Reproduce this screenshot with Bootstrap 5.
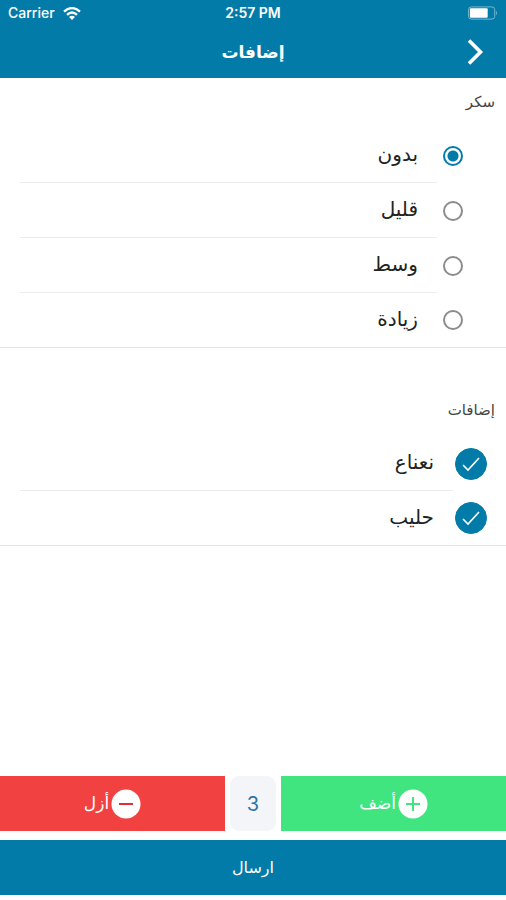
<!DOCTYPE html>
<html lang="ar" dir="rtl">
<head>
<meta charset="utf-8">
<meta name="viewport" content="width=device-width, initial-scale=1">
<title>إضافات</title>
<link href="https://cdn.jsdelivr.net/npm/bootstrap@5.3.0/dist/css/bootstrap.min.css" rel="stylesheet">
<style>
:root { --brand: #037ba9; }
body { font-family: "DejaVu Sans", sans-serif; color: #222; background: #fff; }
.bg-brand { background: var(--brand); }
.status-bar { height: 26px; font: 500 14px/26px Inter, sans-serif; }
.status-bar svg, .title-bar svg { display: block; }
.clock { font-weight: 600; }
.title-bar { height: 52px; }
.title-bar h1 { font-size: 17px; line-height: 52px; }
.back-btn { padding: 0 22px 0 0; }
.group-title { height: 50px; padding: 0 11px 2px; font-size: 15px; color: #444; }
.group-gap { height: 38px; }
.option { height: 55px; cursor: pointer; }
.option-text { margin-inline-end: 20px; padding: 0 19px 2px 0; font-size: 20px; border-bottom: 1px solid #ececec; }
.option-group .option:last-child { border-bottom: 1px solid #e4e4e4; }
.option-group .option:last-child .option-text { border-bottom: 0; }
.option .form-check-input { margin: 0; flex: none; box-shadow: none; background-color: #fff; }
.option .form-check-input[type=radio] { width: 20px; height: 20px; margin-inline: 43px 6px; border: 2px solid #8c8c8c; }
.option .form-check-input[type=radio]:checked { border-color: var(--brand); background-image: radial-gradient(circle, var(--brand) 5px, transparent 6px); }
.option .form-check-input[type=checkbox] { width: 32px; height: 32px; margin-inline: 19px 2px; border: 1px solid #aaa; border-radius: 50%; }
.option .form-check-input[type=checkbox]:checked { border-color: var(--brand); background-color: var(--brand); background-size: 32px;
  background-image: url("data:image/svg+xml,%3csvg xmlns='http://www.w3.org/2000/svg' viewBox='0 0 32 32'%3e%3cpath fill='none' stroke='%23fff' stroke-width='1.6' d='M8 17l5 5L24 10'/%3e%3c/svg%3e"); }
.action-btn { height: 55px; padding: 0; gap: 2px; border: 0; border-radius: 0; font-size: 17px; color: #fff; }
.action-btn:hover { color: #fff; }
.add-btn, .add-btn:hover { background: #40e57f; }
.remove-btn, .remove-btn:hover { background: #f24141; }
.count { width: 46px; margin: 0 5px; border-radius: 9px; background: #f4f5f9; color: #2e74a5; font: 20px Inter, sans-serif; }
.page-foot { padding-bottom: 5px; }
.send-btn, .send-btn:hover { margin-top: 9px; background: var(--brand); font-size: 16px; font-weight: 500; }
</style>
<script src="https://cdn.jsdelivr.net/npm/bootstrap@5.3.0/dist/js/bootstrap.bundle.min.js"></script>
</head>
<body>
<div class="d-flex flex-column min-vh-100">
  <header class="bg-brand text-white">
    <div class="status-bar row g-0 px-2" dir="ltr">
      <div class="col d-flex align-items-center gap-2">
        <span>Carrier</span>
        <svg width="18" height="13" viewBox="0 0 18 13" fill="none" stroke="#fff" stroke-width="2.4" aria-hidden="true"><path d="M1 4.6Q9-2.4 17 4.6M4 7.8q5-4.4 10 0"/><path d="M9 13L6 10q3-2.4 6 0z" fill="#fff" stroke="none"/></svg>
      </div>
      <div class="col-auto clock">2:57 PM</div>
      <div class="col d-flex align-items-center justify-content-end">
        <svg width="30" height="14" viewBox="0 0 32 14" aria-hidden="true"><rect x=".5" y=".5" width="28" height="13" rx="3" fill="none" stroke="#7fb9d1"/><rect x="2" y="2" width="19" height="10" rx="1" fill="#fff"/><path d="M30 4.5q2 2.5 0 5z" fill="#7fb9d1"/></svg>
      </div>
    </div>
    <div class="title-bar row g-0 align-items-center">
      <div class="col d-flex">
        <button type="button" class="btn border-0 back-btn" aria-label="رجوع">
          <svg width="18" height="28" viewBox="0 0 18 28" fill="none" stroke="#fff" stroke-width="3.6" aria-hidden="true"><path d="M3 2.5l11.5 11.5L3 25.5"/></svg>
        </button>
      </div>
      <h1 class="col-auto m-0 fw-bold">إضافات</h1>
      <div class="col"></div>
    </div>
  </header>

  <main>
    <section aria-labelledby="sugar">
      <h2 id="sugar" class="group-title d-flex align-items-center m-0">سكر</h2>
      <div class="option-group" role="radiogroup" aria-labelledby="sugar">
        <label class="option d-flex align-items-center"><input class="form-check-input" type="radio" name="sugar" checked><span class="option-text flex-fill align-self-stretch d-flex align-items-center">بدون</span></label>
        <label class="option d-flex align-items-center"><input class="form-check-input" type="radio" name="sugar"><span class="option-text flex-fill align-self-stretch d-flex align-items-center">قليل</span></label>
        <label class="option d-flex align-items-center"><input class="form-check-input" type="radio" name="sugar"><span class="option-text flex-fill align-self-stretch d-flex align-items-center">وسط</span></label>
        <label class="option d-flex align-items-center"><input class="form-check-input" type="radio" name="sugar"><span class="option-text flex-fill align-self-stretch d-flex align-items-center">زيادة</span></label>
      </div>
    </section>
    <div class="group-gap"></div>
    <section aria-labelledby="extras">
      <h2 id="extras" class="group-title d-flex align-items-center m-0">إضافات</h2>
      <div class="option-group">
        <label class="option d-flex align-items-center"><input class="form-check-input" type="checkbox" checked><span class="option-text flex-fill align-self-stretch d-flex align-items-center">نعناع</span></label>
        <label class="option d-flex align-items-center"><input class="form-check-input" type="checkbox" checked><span class="option-text flex-fill align-self-stretch d-flex align-items-center">حليب</span></label>
      </div>
    </section>
  </main>

  <footer class="page-foot mt-auto">
    <div class="d-flex">
      <button type="button" class="btn action-btn add-btn w-50 d-flex align-items-center justify-content-center">
        <svg width="30" height="30" viewBox="0 0 30 30" aria-hidden="true"><circle cx="15" cy="15" r="14.5" fill="#fff"/><path d="M8 15h14M15 8v14" stroke="#40e57f" stroke-width="2"/></svg>أضف
      </button>
      <output class="count d-flex align-items-center justify-content-center flex-shrink-0">3</output>
      <button type="button" class="btn action-btn remove-btn w-50 d-flex align-items-center justify-content-center">
        <svg width="30" height="30" viewBox="0 0 30 30" aria-hidden="true"><circle cx="15" cy="15" r="14.5" fill="#fff"/><path d="M8 15h14" stroke="#e02f35" stroke-width="2"/></svg>أزل
      </button>
    </div>
    <button type="button" class="btn action-btn send-btn w-100 d-block">ارسال</button>
  </footer>
</div>
</body>
</html>
